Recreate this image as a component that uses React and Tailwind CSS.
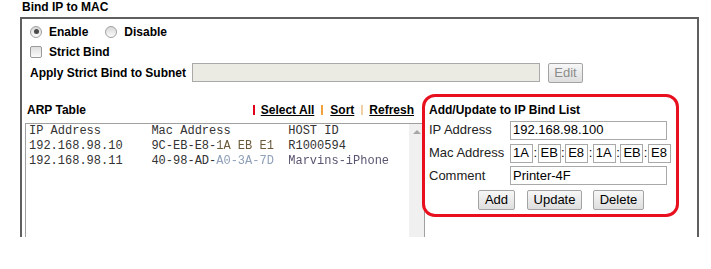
import React from 'react';

function Radio({ checked }) {
  return (
    <span className="w-[12px] h-[12px] rounded-full border border-[#a0a0a0] bg-linear-to-b from-[#d8d8d8] to-[#fbfbfb] flex items-center justify-center shrink-0">
      {checked && <span className="w-[5px] h-[5px] rounded-full bg-[#4a4a4a]" />}
    </span>
  );
}

function Checkbox() {
  return <span className="w-[12px] h-[12px] border border-[#9a9a9a] rounded-[2px] bg-linear-to-b from-[#dedede] to-[#fafafa] shrink-0" />;
}

function Button({ children, w, disabled }) {
  return (
    <span
      className={`${w} h-[20px] flex items-center justify-center border border-[#a3a3a3] rounded-[2px] bg-linear-to-b from-[#f7f7f7] to-[#dedede] text-[13px] ${
        disabled ? 'text-[#8c8c8c]' : 'text-black'
      }`}
    >
      {children}
    </span>
  );
}

function Field({ w, value }) {
  return (
    <span className={`${w} h-[19px] border border-[#a9a9a9] bg-white flex items-center pl-[2px] text-[13px] text-black overflow-hidden whitespace-nowrap`}>
      {value}
    </span>
  );
}

const macParts = ['1A', 'EB', 'E8', '1A', 'EB', 'E8'];

export default function App() {
  return (
    <div className="w-[711px] h-[269px] bg-white overflow-hidden font-['Liberation_Sans',Arial,sans-serif] text-black">
      <div className="pl-[22px] h-[14px] text-[12px] leading-[14px] font-bold">Bind IP to MAC</div>

      <div className="mt-[3px] ml-[20px] w-[679px] h-[220px] border-t-2 border-x-2 border-[#5f5f5f] overflow-hidden">
        <div className="pt-[2px] pl-[8px] text-[12px] font-bold">
          <div className="h-[21px] flex items-center">
            <Radio checked />
            <span className="ml-[7px]">Enable</span>
            <span className="ml-[17px]">
              <Radio />
            </span>
            <span className="ml-[7px]">Disable</span>
          </div>
          <div className="h-[20px] flex items-center">
            <Checkbox />
            <span className="ml-[7px]">Strict Bind</span>
          </div>
          <div className="h-[21px] flex items-center">
            <span className="w-[162px]">Apply Strict Bind to Subnet</span>
            <span className="w-[348px] h-[19px] border border-[#a9a9a9] bg-[#ebebe4]" />
            <span className="ml-[8px] font-normal">
              <Button w="w-[35px]" disabled>Edit</Button>
            </span>
          </div>
        </div>

        <div className="flex h-[154px]">
          {/* ARP table */}
          <div className="w-[403px] pl-[3px] pt-[19px] flex flex-col">
            <div className="h-[16px] flex items-center text-[12px] font-bold pl-[2px] pr-[11px]">
              <span>ARP Table</span>
              <span className="ml-auto flex items-center">
                <span className="w-[2px] h-[10px] bg-[#e3001b]" />
                <span className="ml-[6px] underline">Select All</span>
                <span className="ml-[7px] w-[2px] h-[10px] bg-[#f0a23a]" />
                <span className="ml-[7px] underline">Sort</span>
                <span className="ml-[7px] w-[2px] h-[10px] bg-[#f3cfa6]" />
                <span className="ml-[6px] underline">Refresh</span>
              </span>
            </div>
            <div className="mt-[5px] w-[400px] h-[140px] border-t border-x border-[#a0a0a0] flex overflow-hidden">
              <div className="flex-1 pl-[3px] overflow-hidden">
                <pre className="font-['Liberation_Mono','Courier_New',monospace] text-[12px] leading-[15px] text-[#333]">
                  {'IP Address       Mac Address        HOST ID\n'}
                  {'192.168.98.10    9C-EB-E8-'}
                  <span className="blur-[0.5px] text-[#6b5a3a]">1A EB E1</span>
                  {'  R1000594\n'}
                  {'192.168.98.11    40-98-AD-'}
                  <span className="blur-[0.7px] text-[#8fa0b8]">A0-3A-7D</span>
                  {'  '}
                  <span className="blur-[0.7px] text-[#5b5470]">Marvins-iPhone</span>
                </pre>
              </div>
              <div className="w-[15px] bg-[#f0f0f0] shrink-0">
                <div className="h-[15px] flex items-center justify-center">
                  <span className="w-0 h-0 border-l-[4px] border-r-[4px] border-b-[4px] border-l-transparent border-r-transparent border-b-[#a6a6a6]" />
                </div>
              </div>
            </div>
          </div>

          {/* Add / Update panel */}
          <div className="-ml-[3px] pt-[11px]">
            <div className="w-[257px] h-[123px] border-[3px] border-[#e8101e] rounded-[13px] text-[13px] text-[#222]">
              <div className="mt-[4px] h-[18px] pl-[4px] flex items-center text-[12px] font-bold text-black">
                Add/Update to IP Bind List
              </div>
              <div className="mt-[1px] h-[20px] pl-[4px] flex items-center">
                <span className="w-[81px]">IP Address</span>
                <Field w="w-[157px]" value="192.168.98.100" />
              </div>
              <div className="mt-[3px] h-[20px] pl-[4px] flex items-center">
                <span className="w-[81px]">Mac Address</span>
                {macParts.map((p, i) => (
                  <React.Fragment key={i}>
                    {i > 0 && <span className="w-[4.6px] flex justify-center text-black">:</span>}
                    <Field w="w-[23px]" value={p} />
                  </React.Fragment>
                ))}
              </div>
              <div className="mt-[2px] h-[21px] pl-[4px] flex items-center">
                <span className="w-[81px]">Comment</span>
                <Field w="w-[157px]" value="Printer-4F" />
              </div>
              <div className="mt-[4px] h-[20px] pl-[53px] flex items-center">
                <Button w="w-[37px]">Add</Button>
                <span className="ml-[12px]">
                  <Button w="w-[55px]">Update</Button>
                </span>
                <span className="ml-[11px]">
                  <Button w="w-[51px]">Delete</Button>
                </span>
              </div>
            </div>
          </div>
        </div>
      </div>
    </div>
  );
}
